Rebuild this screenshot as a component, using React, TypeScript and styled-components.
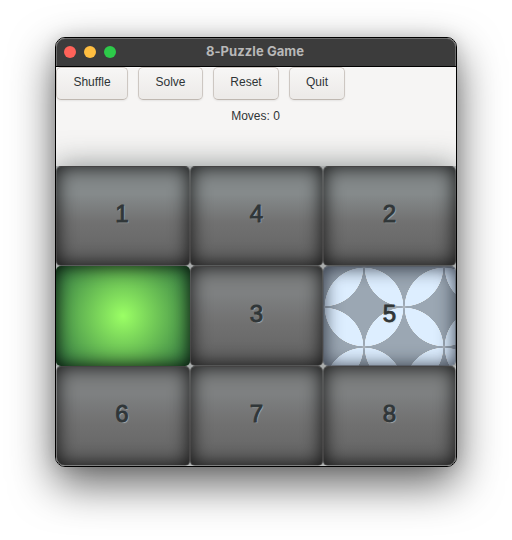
import React from "react";
import styled, { createGlobalStyle, css } from "styled-components";

const GlobalStyle = createGlobalStyle`
  * { box-sizing: border-box; }
  html, body { margin: 0; background: #fff; }
  body { font-family: "Liberation Sans", Arial, sans-serif; overflow: hidden; }
`;

const Desktop = styled.main`
  display: flex;
  justify-content: center;
  align-items: flex-start;
  width: 512px;
  height: 540px;
  padding-top: 37px;
  overflow: hidden;
`;

const Window = styled.section`
  position: relative;
  display: flex;
  flex-direction: column;
  width: 402px;
  height: 430px;
  border: 1px solid #000;
  border-radius: 10px;
  background: #f6f5f4;
  box-shadow: 0 17px 44px rgba(0, 0, 0, 0.62), 0 0 16px rgba(0, 0, 0, 0.12);

  &::after {
    content: "";
    position: absolute;
    inset: 0;
    border-radius: 9px;
    box-shadow: inset 0 0 0 1px rgba(255, 255, 255, 0.25);
    pointer-events: none;
    clip-path: polygon(0 0, 100% 0, 100% 28px, 0 28px, 0 328px, 100% 328px, 100% 100%, 0 100%);
  }
`;

const TitleBar = styled.header`
  display: grid;
  grid-template-columns: 110px 1fr 112px;
  align-items: center;
  flex: none;
  height: 29px;
  padding-bottom: 2px;
  background: #3c3c3c;
  border-bottom: 1px solid #000;
  border-radius: 9px 9px 0 0;
`;

const Lights = styled.div`
  display: flex;
  gap: 8px;
  padding: 1px 0 0 8px;
`;

const Light = styled.i<{ $color: string }>`
  width: 12px;
  height: 12px;
  border-radius: 50%;
  background: ${(p) => p.$color};
`;

const Title = styled.h1`
  margin: 0;
  text-align: center;
  font: 700 13px/16px Inter, sans-serif;
  letter-spacing: 0.08px;
  color: #b8b8b8;
  white-space: nowrap;
`;

const Toolbar = styled.nav`
  display: flex;
  gap: 10px;
  flex: none;
  height: 33px;
`;

const ToolButton = styled.button<{ $width: number }>`
  width: ${(p) => p.$width}px;
  height: 33px;
  padding: 0 0 3px;
  border: 1px solid #cdc7c2;
  border-bottom-color: #bfb8b1;
  border-radius: 5px;
  background: linear-gradient(#f6f5f4 10%, #edebe9 90%);
  box-shadow: 0 1px 2px rgba(0, 0, 0, 0.07), inset 0 1px #fbfafa;
  font: 12px/16px "Liberation Sans", Arial, sans-serif;
  color: #2e3436;
`;

const Status = styled.p`
  flex: none;
  height: 66px;
  margin: 0;
  padding: 8px 1px 0 0;
  text-align: center;
  font-size: 12px;
  line-height: 16px;
  color: #2e3436;
`;

const Board = styled.div`
  display: grid;
  grid-template-columns: 134px 133px 133px;
  grid-template-rows: repeat(3, 100px);
  height: 300px;
  background: #a9acac;
  border-radius: 0 0 9px 9px;
  box-shadow: 0 0 30px rgba(60, 70, 70, 0.6);
  clip-path: inset(-40px 0 0 0 round 0 0 9px 9px);
`;

type Look = "stone" | "empty" | "petals";

const looks = {
  stone: css<{ $top: string }>`
    border: 1px solid rgba(25, 22, 22, 0.4);
    background: linear-gradient(${(p) => p.$top} 0%, ${(p) => p.$top} 28%, #717171 56%, #626262 100%);
    box-shadow: inset 0 0 19px rgba(0, 0, 0, 0.85);
  `,
  empty: css`
    background: radial-gradient(circle, #9bff65 0, #3b8345 74px, #2b703c 100%);
    box-shadow: inset 0 0 18px rgba(0, 0, 0, 0.9);
  `,
  petals: css`
    border: 1px solid rgba(65, 70, 78, 0.75);
    background-color: #ddeeff;
    background-image:
      radial-gradient(closest-side, #fff 97.5%, #9ba7b3 99%),
      radial-gradient(closest-side, #fff 97.5%, #9ba7b3 99%);
    background-blend-mode: darken;
    background-size: 80px 80px;
    background-position: 0 0, 40px 40px;
    box-shadow: inset 0 1px 18px rgba(25, 30, 45, 0.85);
  `,
};

const Tile = styled.div<{ $look: Look; $top: string }>`
  display: flex;
  align-items: center;
  justify-content: center;
  border-radius: 5px;
  padding: 0 0 4px 0;
  font-size: 24px;
  line-height: 28px;
  color: #303638;
  -webkit-text-stroke: 0.9px #303638;
  text-shadow: 1px 1px 1px rgba(200, 206, 206, 0.65);
  ${(p) => looks[p.$look]}

  &:nth-child(3n + 1) { padding-right: 2px; }
`;

const actions = [
  { label: "Shuffle", width: 72 },
  { label: "Solve", width: 65 },
  { label: "Reset", width: 66 },
  { label: "Quit", width: 56 },
];

const tiles = ["1", "4", "2", "", "3", "5", "6", "7", "8"];

const lookOf = (value: string): Look =>
  value === "" ? "empty" : value === "5" ? "petals" : "stone";

export default function App() {
  return (
    <>
      <GlobalStyle />
      <Desktop>
        <Window>
          <TitleBar>
            <Lights>
              <Light $color="#ff6259" />
              <Light $color="#ffbe40" />
              <Light $color="#2dca49" />
            </Lights>
            <Title>8-Puzzle Game</Title>
          </TitleBar>
          <Toolbar>
            {actions.map((a) => (
              <ToolButton key={a.label} $width={a.width}>{a.label}</ToolButton>
            ))}
          </Toolbar>
          <Status>Moves: 0</Status>
          <Board>
            {tiles.map((value, i) => (
              <Tile key={i} $look={lookOf(value)} $top={i < 3 ? "#858a8b" : "#7e8081"}>
                {value}
              </Tile>
            ))}
          </Board>
        </Window>
      </Desktop>
    </>
  );
}
